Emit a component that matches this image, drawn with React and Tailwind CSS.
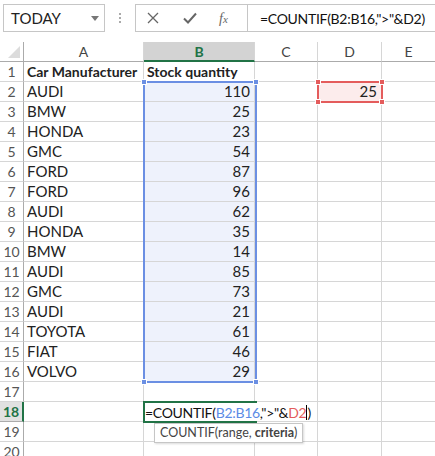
import React from "react";

const rows = [
  ["Car Manufacturer", "Stock quantity"],
  ["AUDI", 110],
  ["BMW", 25],
  ["HONDA", 23],
  ["GMC", 54],
  ["FORD", 87],
  ["FORD", 96],
  ["AUDI", 62],
  ["HONDA", 35],
  ["BMW", 14],
  ["AUDI", 85],
  ["GMC", 73],
  ["AUDI", 21],
  ["TOYOTA", 61],
  ["FIAT", 46],
  ["VOLVO", 29],
  ["", ""],
  ["", ""],
  ["", ""],
  ["", ""],
];

const font = { fontFamily: "Lato, 'Liberation Sans', sans-serif" };

function Handle({ className }) {
  return <span className={`absolute h-[6px] w-[6px] border border-white ${className}`} />;
}

export default function App() {
  return (
    <div className="h-[456px] w-[435px] overflow-hidden bg-white text-[#222]" style={font}>
      {/* formula bar */}
      <div className="flex h-[42px] items-start pt-[4px]">
        <div className="ml-[3px] flex h-[28px] w-[102px] shrink-0 items-center justify-between border border-[#c6c6c6] pl-[7px] pr-[5px] text-[15px]">
          <span>TODAY</span>
          <svg width="8" height="5" viewBox="0 0 8 5">
            <path d="M0 0h8L4 5z" fill="#777" />
          </svg>
        </div>
        <div className="flex h-[28px] w-[30px] shrink-0 flex-col items-center justify-center gap-[2px]">
          <span className="h-[2px] w-[2px] bg-[#aaa]" />
          <span className="h-[2px] w-[2px] bg-[#aaa]" />
          <span className="h-[2px] w-[2px] bg-[#aaa]" />
        </div>
        <div className="flex h-[28px] min-w-0 flex-1 border border-r-0 border-[#c6c6c6]">
          <div className="flex w-[112px] shrink-0 items-center border-r border-[#c6c6c6]">
            <svg className="ml-[11px]" width="12" height="12" viewBox="0 0 12 12">
              <path d="M1 1l10 10M11 1L1 11" stroke="#666" strokeWidth="1.3" />
            </svg>
            <svg className="ml-[24px]" width="14" height="12" viewBox="0 0 14 12">
              <path d="M1 6.5l4 4L13 1.5" stroke="#666" strokeWidth="2" fill="none" />
            </svg>
            <span
              className="ml-[22px] text-[14px] italic text-[#666]"
              style={{ fontFamily: "'Liberation Serif', serif" }}
            >
              f<span className="text-[11px]">x</span>
            </span>
          </div>
          <div className="flex items-center whitespace-nowrap pl-[12px] text-[14px] tracking-[-0.3px] text-[#111]">
            =COUNTIF(B2:B16,"&gt;"&amp;D2)
          </div>
        </div>
      </div>

      {/* grid */}
      <div className="relative">
        <div className="flex h-[20px] text-[14px] text-[#444]">
          <div className="relative w-[24px] border-r border-b border-[#ababab]">
            <svg className="absolute right-[3px] bottom-[3px]" width="12" height="12" viewBox="0 0 12 12">
              <path d="M12 0v12H0z" fill="#dcdcdc" />
            </svg>
          </div>
          <div className="flex w-[120px] items-center justify-center border-r border-b border-r-[#d6d6d6] border-b-[#ababab]">A</div>
          <div className="flex w-[111px] items-center justify-center border-b-2 border-r border-b-[#217346] border-r-[#d6d6d6] bg-[#d3d3d3] font-bold text-[#217346]">B</div>
          <div className="flex w-[63px] items-center justify-center border-r border-b border-r-[#d6d6d6] border-b-[#ababab]">C</div>
          <div className="flex w-[64px] items-center justify-center border-r border-b border-r-[#d6d6d6] border-b-[#ababab]">D</div>
          <div className="flex flex-1 items-center justify-center border-b border-[#ababab]">E</div>
        </div>

        {rows.map((r, i) => {
          const n = i + 1;
          const active = n === 18;
          return (
            <div key={n} className="flex h-[20px] text-[15px]">
              <div
                className={`flex w-[24px] items-center justify-center border-b text-[14px] ${
                  active
                    ? "border-r-2 border-r-[#217346] border-b-[#ababab] bg-[#e1e1e1] font-bold text-[#217346]"
                    : "border-r border-r-[#ababab] border-b-[#d6d6d6] text-[#555]"
                }`}
              >
                {n}
              </div>
              <div
                className={`flex w-[120px] items-center overflow-hidden whitespace-nowrap border-r border-b border-[#d6d6d6] pl-[3px] ${
                  n === 1 ? "text-[14px] font-bold" : ""
                }`}
              >
                {r[0]}
              </div>
              <div
                className={`flex w-[111px] items-center whitespace-nowrap border-r border-b border-[#d6d6d6] pr-[4px] ${
                  n === 1 ? "justify-start pl-[3px] text-[14px] font-bold" : "justify-end"
                } ${n >= 2 && n <= 16 ? "bg-[#eef2fc]" : ""}`}
              >
                {r[1]}
              </div>
              <div className="w-[63px] border-r border-b border-[#d6d6d6]" />
              <div
                className={`flex w-[64px] items-center justify-end border-r border-b border-[#d6d6d6] pr-[4px] ${
                  n === 2 ? "bg-[#fcecec]" : ""
                }`}
              >
                {n === 2 ? 25 : ""}
              </div>
              <div className="flex-1 border-b border-[#d6d6d6]" />
            </div>
          );
        })}

        {/* B2:B16 range */}
        <div className="absolute left-[143px] top-[39px] h-[302px] w-[114px] border-2 border-[#6b8fe3]">
          <Handle className="-left-[4px] -top-[4px] bg-[#6b8fe3]" />
          <Handle className="-right-[4px] -top-[4px] bg-[#6b8fe3]" />
          <Handle className="-left-[4px] -bottom-[4px] bg-[#6b8fe3]" />
          <Handle className="-right-[4px] -bottom-[4px] bg-[#6b8fe3]" />
        </div>

        {/* D2 reference */}
        <div className="absolute left-[317px] top-[39px] h-[22px] w-[66px] border-2 border-[#e45c5c]">
          <Handle className="-left-[4px] -top-[4px] bg-[#e45c5c]" />
          <Handle className="-right-[4px] -top-[4px] bg-[#e45c5c]" />
          <Handle className="-left-[4px] -bottom-[4px] bg-[#e45c5c]" />
          <Handle className="-right-[4px] -bottom-[4px] bg-[#e45c5c]" />
        </div>

        {/* editing cell B18 */}
        <div className="absolute left-[143px] top-[359px] h-[22px] w-[114px] border-2 border-[#217346]" />
        <div className="absolute left-[145px] top-[361px] flex h-[18px] items-center whitespace-nowrap bg-white pr-[2px] text-[14px] tracking-[-0.3px] text-[#111]">
          =COUNTIF(<span className="text-[#5b8be6]">B2:B16</span>,"&gt;"&amp;
          <span className="text-[#e45c5c]">D2</span>
          <span className="h-[15px] w-[1px] bg-black" />)
        </div>

        {/* tooltip */}
        <div className="absolute left-[154px] top-[381px] flex h-[20px] items-center whitespace-nowrap border border-[#c6c6c6] bg-white px-[5px] text-[12.5px] text-[#444] shadow-[1px_1px_2px_rgba(0,0,0,0.15)]">
          COUNTIF(range,&nbsp;<span className="font-bold">criteria</span>)
        </div>
      </div>
    </div>
  );
}
